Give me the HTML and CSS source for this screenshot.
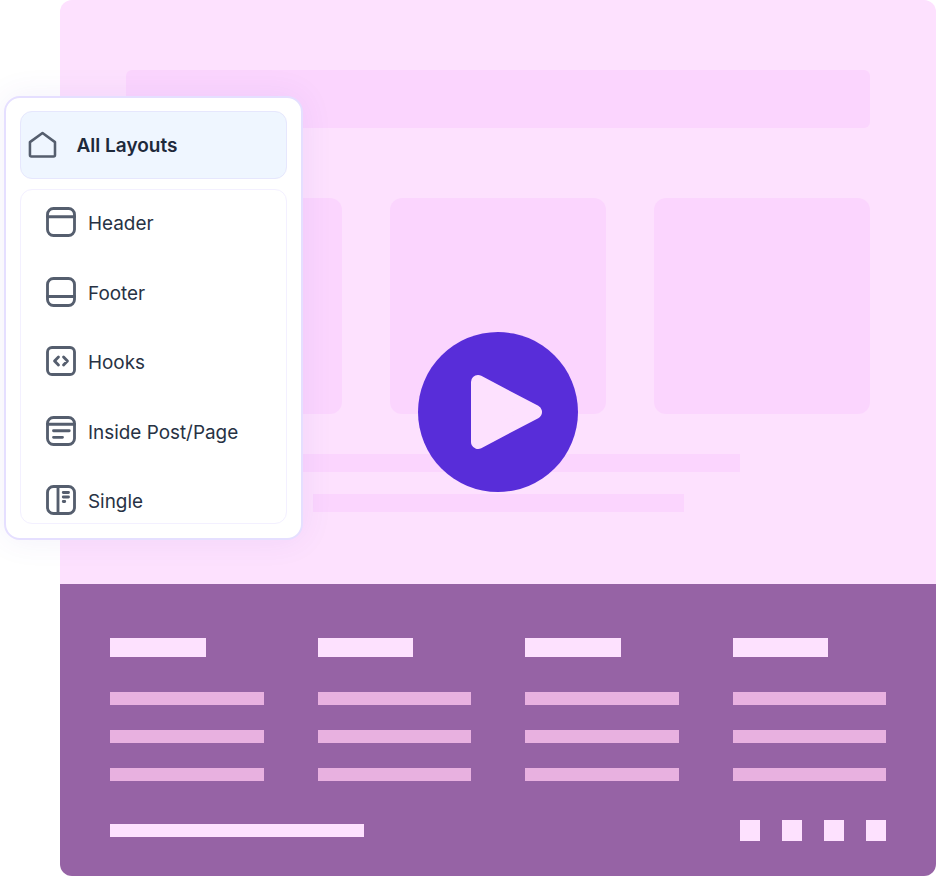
FILE: index.html
```html
<!DOCTYPE html>
<html lang="en">
<head>
  <meta charset="UTF-8">
  <title>All Layouts</title>
  <link rel="stylesheet" href="styles.css">
</head>
<body>
  <div class="escena">

    <!-- page mockup -->
    <div class="maqueta">
      <div class="contenido">
        <div class="banner"></div>
        <div class="tarjetas">
          <div class="tarjeta"></div>
          <div class="tarjeta"></div>
          <div class="tarjeta"></div>
        </div>
        <div class="linea linea-larga"></div>
        <div class="linea linea-corta"></div>
      </div>

      <div class="pie">
        <div class="columnas">
          <div class="columna">
            <div class="titulo"></div>
            <div class="enlace"></div>
            <div class="enlace"></div>
            <div class="enlace"></div>
          </div>
          <div class="columna">
            <div class="titulo"></div>
            <div class="enlace"></div>
            <div class="enlace"></div>
            <div class="enlace"></div>
          </div>
          <div class="columna">
            <div class="titulo"></div>
            <div class="enlace"></div>
            <div class="enlace"></div>
            <div class="enlace"></div>
          </div>
          <div class="columna">
            <div class="titulo"></div>
            <div class="enlace"></div>
            <div class="enlace"></div>
            <div class="enlace"></div>
          </div>
        </div>
        <div class="pie-final">
          <div class="copyright"></div>
          <div class="sociales">
            <span></span><span></span><span></span><span></span>
          </div>
        </div>
      </div>
    </div>

    <!-- play button -->
    <div class="play">
      <svg width="160" height="160" viewBox="0 0 160 160">
        <path class="play-triangulo" d="M60 50 L117 80 L60 110 Z"/>
      </svg>
    </div>

    <!-- layouts menu -->
    <div class="panel">
      <div class="activo">
        <svg class="icono icono-casa" width="36" height="36" viewBox="0 0 24 24">
          <path d="M11.67 4 L20 10.1 V18.6 a1 1 0 0 1 -1 1 H4.3 a1 1 0 0 1 -1 -1 V10.1 Z"/>
        </svg>
        <span>All Layouts</span>
      </div>
      <div class="lista">
        <div class="fila">
          <svg class="icono" width="36" height="36" viewBox="0 0 24 24">
            <rect x="3" y="3" width="18" height="18" rx="4"/>
            <path d="M3 8.5 H21"/>
          </svg>
          <span>Header</span>
        </div>
        <div class="fila">
          <svg class="icono" width="36" height="36" viewBox="0 0 24 24">
            <rect x="3" y="3" width="18" height="18" rx="4"/>
            <path d="M3 15 H21"/>
          </svg>
          <span>Footer</span>
        </div>
        <div class="fila">
          <svg class="icono" width="36" height="36" viewBox="0 0 24 24">
            <rect x="3" y="3" width="18" height="18" rx="3"/>
            <path d="M10.3 9.3 L7.7 12 L10.3 14.7 M13.7 9.3 L16.3 12 L13.7 14.7"/>
          </svg>
          <span>Hooks</span>
        </div>
        <div class="fila">
          <svg class="icono" width="36" height="36" viewBox="0 0 24 24">
            <rect x="3" y="3" width="18" height="18" rx="4"/>
            <path d="M3 7.5 H21 M7 11.8 H17.5 M7 16.2 H13"/>
          </svg>
          <span>Inside Post/Page</span>
        </div>
        <div class="fila">
          <svg class="icono" width="36" height="36" viewBox="0 0 24 24">
            <rect x="3" y="3" width="18" height="18" rx="4"/>
            <path d="M10 3 V21 M13.5 7 H17 M13.5 10 H17 M13.5 13 H14.5"/>
          </svg>
          <span>Single</span>
        </div>
      </div>
    </div>

  </div>
</body>
</html>
```

FILE: styles.css
```css
body {
  margin: 0;
  background-color: white;
  font-family: Inter, "Liberation Sans", sans-serif;
  overflow: hidden;
}
.escena {
  position: relative;
  width: 936px;
  height: 876px;
  overflow: hidden;
}

/* mockup */
.maqueta {
  margin-left: 60px;
  width: 876px;
  height: 876px;
  border-radius: 12px;
  overflow: hidden;
}
.contenido {
  height: 584px;
  padding-top: 70px;
  box-sizing: border-box;
  background-color: #fde1fe;
  display: flex;
  flex-direction: column;
  align-items: center;
}
.banner {
  width: 744px;
  height: 58px;
  background-color: #fbd5fe;
  border-radius: 6px;
}
.tarjetas {
  display: flex;
  gap: 48px;
  margin-top: 70px;
}
.tarjeta {
  width: 216px;
  height: 216px;
  background-color: #fbd5fe;
  border-radius: 12px;
}
.linea {
  height: 18px;
  background-color: #fbd5fe;
}
.linea-larga {
  width: 484px;
  margin-top: 40px;
}
.linea-corta {
  width: 371px;
  margin-top: 22px;
}

/* footer */
.pie {
  height: 292px;
  padding: 54px 49.6px 0 50.33px;
  box-sizing: border-box;
  background-color: #9663a5;
}
.columnas {
  display: flex;
  justify-content: space-between;
}
.columna {
  width: 153.6px;
}
.titulo {
  width: 95.6px;
  height: 18.5px;
  margin-bottom: 35.83px;
  background-color: #fde1fe;
}
.enlace {
  height: 12.4px;
  margin-bottom: 25.6px;
  background-color: #e8b1e0;
}
.pie-final {
  display: flex;
  justify-content: space-between;
  align-items: center;
  margin-top: 13.9px;
}
.copyright {
  width: 253.6px;
  height: 12.4px;
  background-color: #fde1fe;
}
.sociales {
  display: flex;
  gap: 21.5px;
}
.sociales span {
  width: 20.5px;
  height: 20.5px;
  background-color: #fde1fe;
}

/* play */
.play {
  position: absolute;
  left: 418px;
  top: 332px;
  width: 160px;
  height: 160px;
  border-radius: 50%;
  background-color: #582dd9;
}
.play svg {
  display: block;
}
.play-triangulo {
  fill: #fde1fe;
  stroke: #fde1fe;
  stroke-width: 14;
  stroke-linejoin: round;
}

/* menu */
.panel {
  position: absolute;
  left: 4px;
  top: 96px;
  width: 299px;
  height: 444px;
  padding: 13px 14px 14px;
  box-sizing: border-box;
  display: flex;
  flex-direction: column;
  gap: 10px;
  background-color: white;
  border: 2px solid #e5dfff;
  border-radius: 16px;
  box-shadow: 0 0 32px rgba(90, 70, 190, 0.08);
}
.activo {
  display: flex;
  align-items: center;
  gap: 15.5px;
  height: 68px;
  padding-left: 4px;
  box-sizing: border-box;
  flex-shrink: 0;
  background-color: #eff6ff;
  border: 1px solid #e6e7fd;
  border-radius: 12px;
  font-size: 19px;
  font-weight: 600;
  color: #1e293b;
}
.lista {
  flex: 1;
  min-height: 0;
  padding: 15.5px 0 0 21.5px;
  display: flex;
  flex-direction: column;
  gap: 33.6px;
  border: 1px solid #f3f0ff;
  border-radius: 12px;
  overflow: hidden;
}
.fila {
  display: flex;
  align-items: center;
  gap: 9.5px;
  height: 36px;
  flex-shrink: 0;
  font-size: 18.9px;
  color: #273244;
}
.fila .icono {
  margin-top: -3px;
}
.icono {
  flex-shrink: 0;
  fill: none;
  stroke: #555e6e;
  stroke-width: 1.9;
  stroke-linecap: round;
  stroke-linejoin: round;
}
.icono-casa {
  stroke-width: 1.7;
}
```
